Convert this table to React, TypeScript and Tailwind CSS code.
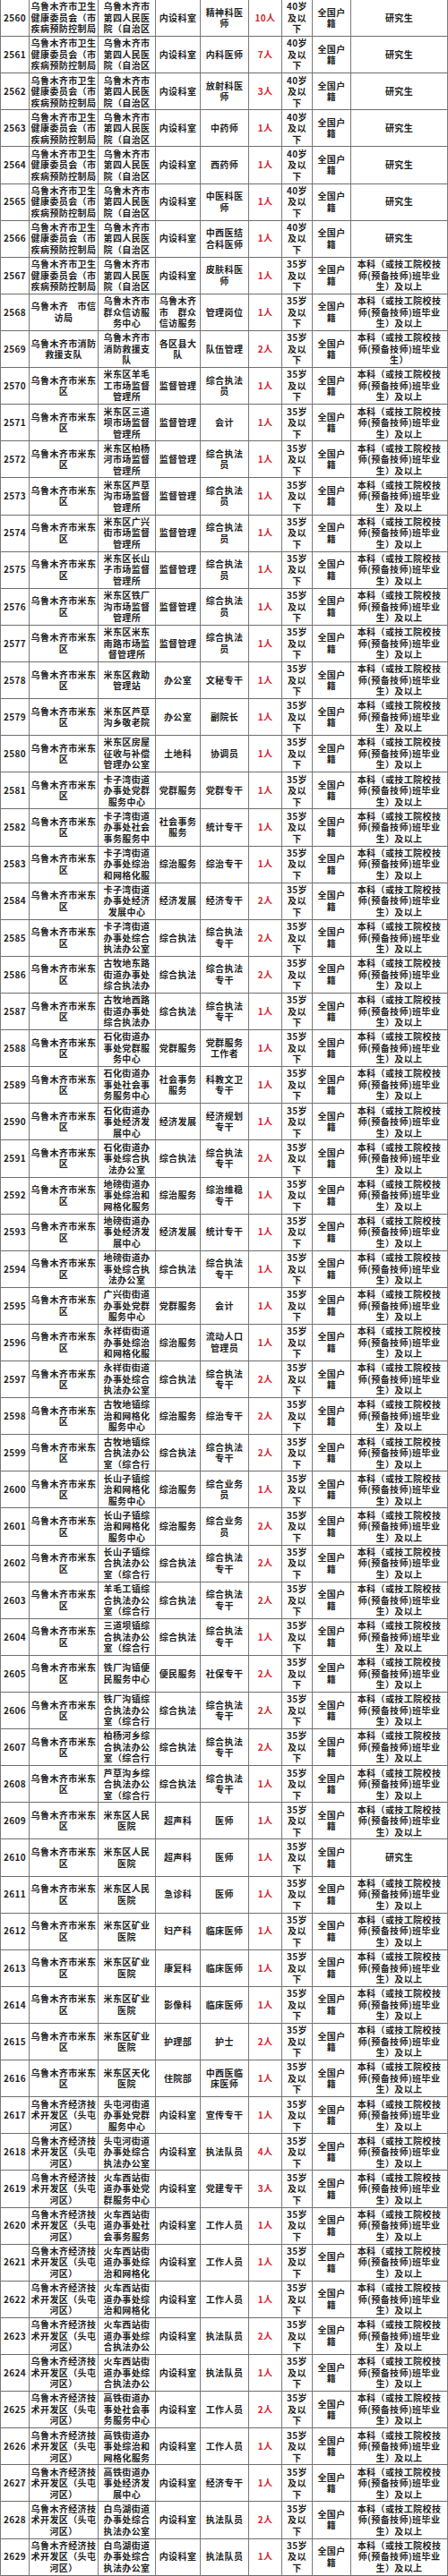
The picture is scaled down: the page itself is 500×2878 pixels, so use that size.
// cell texts are kept as far as the sheet shows them (long cells are cut after three lines)
const WJ = "乌鲁木齐市卫生健康委员会（市疾病预防控制局";
const SY = "乌鲁木齐市第四人民医院（自治区";
const MD = "乌鲁木齐市米东区";
const JK = "乌鲁木齐经济技术开发区（头屯河区）";

// id, org, unit, dept, post, count, age, edu (G = 研究生, B = 本科及以上, S = 本科)
type Row = [number, string, string, string, string, number, number, "G" | "B" | "S"];

const rows: Row[] = [
  [2560, WJ, SY, "内设科室", "精神科医师", 10, 40, "G"],
  [2561, WJ, SY, "内设科室", "内科医师", 7, 40, "G"],
  [2562, WJ, SY, "内设科室", "放射科医师", 3, 40, "G"],
  [2563, WJ, SY, "内设科室", "中药师", 1, 40, "G"],
  [2564, WJ, SY, "内设科室", "西药师", 1, 40, "G"],
  [2565, WJ, SY, "内设科室", "中医科医师", 1, 40, "G"],
  [2566, WJ, SY, "内设科室", "中西医结合科医师", 1, 40, "G"],
  [2567, WJ, SY, "内设科室", "皮肤科医师", 1, 35, "B"],
  [2568, "乌鲁木齐　市信访局", "乌鲁木齐市群众信访服务中心", "乌鲁木齐市　群众信访服务", "管理岗位", 1, 35, "B"],
  [2569, "乌鲁木齐市消防救援支队", "乌鲁木齐市消防救援支队", "各区县大队", "队伍管理", 2, 35, "S"],
  [2570, MD, "米东区羊毛工市场监督管理所", "监督管理", "综合执法员", 1, 35, "B"],
  [2571, MD, "米东区三道坝市场监督管理所", "监督管理", "会计", 1, 35, "B"],
  [2572, MD, "米东区柏杨河市场监督管理所", "监督管理", "综合执法员", 1, 35, "B"],
  [2573, MD, "米东区芦草沟市场监督管理所", "监督管理", "综合执法员", 1, 35, "B"],
  [2574, MD, "米东区广兴街市场监督管理所", "监督管理", "综合执法员", 1, 35, "B"],
  [2575, MD, "米东区长山子市场监督管理所", "监督管理", "综合执法员", 1, 35, "B"],
  [2576, MD, "米东区铁厂沟市场监督管理所", "监督管理", "综合执法员", 1, 35, "B"],
  [2577, MD, "米东区米东南路市场监督管理所", "监督管理", "综合执法员", 1, 35, "B"],
  [2578, MD, "米东区救助管理站", "办公室", "文秘专干", 1, 35, "B"],
  [2579, MD, "米东区芦草沟乡敬老院", "办公室", "副院长", 1, 35, "B"],
  [2580, MD, "米东区房屋征收与补偿管理办公室", "土地科", "协调员", 1, 35, "B"],
  [2581, MD, "卡子湾街道办事处党群服务中心", "党群服务", "党群专干", 1, 35, "B"],
  [2582, MD, "卡子湾街道办事处社会事务服务中", "社会事务服务", "统计专干", 1, 35, "B"],
  [2583, MD, "卡子湾街道办事处综治和网格化服", "综治服务", "综治专干", 1, 35, "B"],
  [2584, MD, "卡子湾街道办事处经济发展中心", "经济发展", "经济专干", 2, 35, "B"],
  [2585, MD, "卡子湾街道办事处综合执法办公室", "综合执法", "综合执法专干", 2, 35, "B"],
  [2586, MD, "古牧地东路街道办事处综合执法办", "综合执法", "综合执法专干", 2, 35, "B"],
  [2587, MD, "古牧地西路街道办事处综合执法办", "综合执法", "综合执法专干", 1, 35, "B"],
  [2588, MD, "石化街道办事处党群服务中心", "党群服务", "党群服务工作者", 1, 35, "B"],
  [2589, MD, "石化街道办事处社会事务服务中心", "社会事务服务", "科教文卫专干", 1, 35, "B"],
  [2590, MD, "石化街道办事处经济发展中心", "经济发展", "经济规划专干", 1, 35, "B"],
  [2591, MD, "石化街道办事处综合执法办公室", "综合执法", "综合执法专干", 2, 35, "B"],
  [2592, MD, "地磅街道办事处综治和网格化服务", "综治服务", "综治维稳专干", 1, 35, "B"],
  [2593, MD, "地磅街道办事处经济发展中心", "经济发展", "统计专干", 1, 35, "B"],
  [2594, MD, "地磅街道办事处综合执法办公室", "综合执法", "综合执法专干", 1, 35, "B"],
  [2595, MD, "广兴街街道办事处党群服务中心", "党群服务", "会计", 1, 35, "B"],
  [2596, MD, "永祥街街道办事处综治和网格化服", "综治服务", "流动人口管理员", 1, 35, "B"],
  [2597, MD, "永祥街街道办事处综合执法办公室", "综合执法", "综合执法专干", 2, 35, "B"],
  [2598, MD, "古牧地镇综治和网格化服务中心", "综治服务", "综治专干", 2, 35, "B"],
  [2599, MD, "古牧地镇综合执法办公室（综合行", "综合执法", "综合执法专干", 2, 35, "B"],
  [2600, MD, "长山子镇综治和网格化服务中心", "综治服务", "综合业务员", 1, 35, "B"],
  [2601, MD, "长山子镇综治和网格化服务中心", "综治服务", "综合业务员", 2, 35, "B"],
  [2602, MD, "长山子镇综合执法办公室（综合行", "综合执法", "综合执法专干", 2, 35, "B"],
  [2603, MD, "羊毛工镇综合执法办公室（综合行", "综合执法", "综合执法专干", 2, 35, "B"],
  [2604, MD, "三道坝镇综合执法办公室（综合行", "综合执法", "综合执法专干", 1, 35, "B"],
  [2605, MD, "铁厂沟镇便民服务中心", "便民服务", "社保专干", 2, 35, "B"],
  [2606, MD, "铁厂沟镇综合执法办公室（综合行", "综合执法", "综合执法专干", 2, 35, "B"],
  [2607, MD, "柏杨河乡综合执法办公室（综合行", "综合执法", "综合执法专干", 2, 35, "B"],
  [2608, MD, "芦草沟乡综合执法办公室（综合行", "综合执法", "综合执法专干", 1, 35, "B"],
  [2609, MD, "米东区人民医院", "超声科", "医师", 1, 35, "B"],
  [2610, MD, "米东区人民医院", "超声科", "医师", 1, 35, "G"],
  [2611, MD, "米东区人民医院", "急诊科", "医师", 1, 35, "B"],
  [2612, MD, "米东区矿业医院", "妇产科", "临床医师", 1, 35, "B"],
  [2613, MD, "米东区矿业医院", "康复科", "临床医师", 1, 35, "B"],
  [2614, MD, "米东区矿业医院", "影像科", "临床医师", 1, 35, "B"],
  [2615, MD, "米东区矿业医院", "护理部", "护士", 2, 35, "B"],
  [2616, MD, "米东区天化医院", "住院部", "中西医临床医师", 1, 35, "B"],
  [2617, JK, "头屯河街道办事处党群服务中心", "内设科室", "宣传专干", 1, 35, "B"],
  [2618, JK, "头屯河街道办事处综合执法办公室", "内设科室", "执法队员", 4, 35, "B"],
  [2619, JK, "火车西站街道办事处党群服务中心", "内设科室", "党建专干", 3, 35, "B"],
  [2620, JK, "火车西站街道办事处社会事务服务", "内设科室", "工作人员", 1, 35, "B"],
  [2621, JK, "火车西站街道办事处综治和网格化", "内设科室", "工作人员", 1, 35, "B"],
  [2622, JK, "火车西站街道办事处综治和网格化", "内设科室", "工作人员", 1, 35, "B"],
  [2623, JK, "火车西站街道办事处综合执法办公", "内设科室", "执法队员", 2, 35, "B"],
  [2624, JK, "火车西站街道办事处综合执法办公", "内设科室", "执法队员", 1, 35, "B"],
  [2625, JK, "高铁街道办事处社会事务服务中心", "内设科室", "工作人员", 2, 35, "B"],
  [2626, JK, "高铁街道办事处综治和网格化服务", "内设科室", "工作人员", 1, 35, "B"],
  [2627, JK, "高铁街道办事处经济发展中心", "内设科室", "经济专干", 1, 35, "B"],
  [2628, JK, "白鸟湖街道办事处综合执法办公室", "内设科室", "执法队员", 2, 35, "B"],
  [2629, JK, "白鸟湖街道办事处综合执法办公室", "内设科室", "执法队员", 1, 35, "B"],
];

function Cell({ children, className = "" }: { children: React.ReactNode; className?: string }) {
  return (
    <div
      className={
        "flex min-h-0 justify-center overflow-hidden border-r border-[#7a7a7a] text-center [align-items:safe_center] " +
        className
      }
    >
      <div className="w-full break-all">{children}</div>
    </div>
  );
}

function Edu({ kind }: { kind: Row[7] }) {
  if (kind === "G") return <span>研究生</span>;
  const lines =
    kind === "B"
      ? ["本科（或技工院校技", "师(预备技师)班毕业", "生）及以上"]
      : ["本科（或技工院校技", "师(预备技师)班毕业", "生）"];
  return (
    <>
      {lines.map((l) => (
        <div key={l} className="whitespace-nowrap">
          {l}
        </div>
      ))}
    </>
  );
}

export default function App() {
  return (
    <div
      className="w-[500px] border-l border-[#7a7a7a] bg-white text-[10px] leading-[12.5px] font-bold tracking-[0.4px] text-[#1e1e1e]"
      style={{ fontFamily: '"Noto Sans CJK SC", "Noto Sans", sans-serif' }}
    >
      {rows.map(([id, org, unit, dept, post, count, age, edu]) => (
        <div
          key={id}
          className="grid h-[41.11px] grid-cols-[32px_77px_64px_50px_54px_37px_34px_43px_108px] grid-rows-1 overflow-hidden border-b border-[#6e6e6e]"
        >
          <Cell className="whitespace-nowrap">{String(id)}</Cell>
          <Cell className="px-[1px]">{org}</Cell>
          <Cell className="px-[2px]">{unit}</Cell>
          <Cell className="px-[2px]">{dept}</Cell>
          <Cell className="px-[2px]">{post}</Cell>
          <Cell className="text-[#d7262e]">{`${count}人`}</Cell>
          <Cell className="px-[2px]">{`${age}岁及以下`}</Cell>
          <Cell className="px-[3px]">全国户籍</Cell>
          <Cell className="px-[3px]">
            <Edu kind={edu} />
          </Cell>
        </div>
      ))}
    </div>
  );
}
